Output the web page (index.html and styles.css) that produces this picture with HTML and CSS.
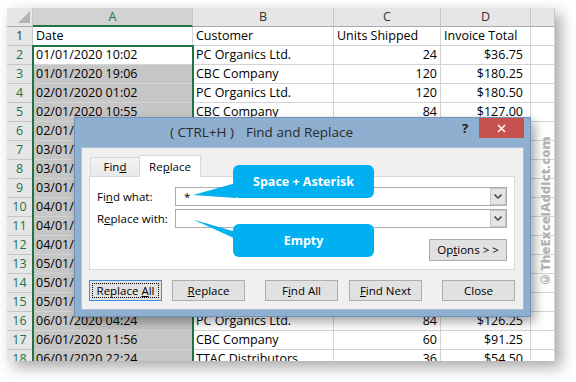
FILE: index.html
```html
<!DOCTYPE html>
<html>
<head>
<meta charset="utf-8">
<title>Find and Replace</title>
<link rel="stylesheet" href="styles.css">
</head>
<body>
<div class="stage">
  <div class="sheet">
    <div class="grid">
      <div class="c corner"><span class="tri"></span></div>
      <div class="c ch sel">A</div><div class="c ch">B</div><div class="c ch">C</div><div class="c ch">D</div><div class="c ch"></div>

      <div class="c rh plain">1</div><div class="c">Date</div><div class="c">Customer</div><div class="c">Units Shipped</div><div class="c">Invoice Total</div><div class="c"></div>
      <div class="c rh">2</div><div class="c">01/01/2020 10:02</div><div class="c">PC Organics Ltd.</div><div class="c num">24</div><div class="c cur">$36.75</div><div class="c"></div>
      <div class="c rh">3</div><div class="c fill">01/01/2020 19:06</div><div class="c">CBC Company</div><div class="c num">120</div><div class="c cur">$180.25</div><div class="c"></div>
      <div class="c rh">4</div><div class="c fill">02/01/2020 01:02</div><div class="c">PC Organics Ltd.</div><div class="c num">120</div><div class="c cur">$180.50</div><div class="c"></div>
      <div class="c rh">5</div><div class="c fill">02/01/2020 10:55</div><div class="c">CBC Company</div><div class="c num">84</div><div class="c cur">$127.00</div><div class="c"></div>
      <div class="c rh">6</div><div class="c fill">02/01/2020 17:30</div><div class="c">TTAC Distributors</div><div class="c num">48</div><div class="c cur">$72.00</div><div class="c"></div>
      <div class="c rh">7</div><div class="c fill">03/01/2020 08:15</div><div class="c">PC Organics Ltd.</div><div class="c num">60</div><div class="c cur">$91.25</div><div class="c"></div>
      <div class="c rh">8</div><div class="c fill">03/01/2020 12:40</div><div class="c">CBC Company</div><div class="c num">36</div><div class="c cur">$54.50</div><div class="c"></div>
      <div class="c rh">9</div><div class="c fill">03/01/2020 21:05</div><div class="c">TTAC Distributors</div><div class="c num">120</div><div class="c cur">$180.25</div><div class="c"></div>
      <div class="c rh">10</div><div class="c fill">04/01/2020 02:18</div><div class="c">PC Organics Ltd.</div><div class="c num">24</div><div class="c cur">$36.75</div><div class="c"></div>
      <div class="c rh">11</div><div class="c fill">04/01/2020 09:47</div><div class="c">CBC Company</div><div class="c num">84</div><div class="c cur">$127.00</div><div class="c"></div>
      <div class="c rh">12</div><div class="c fill">04/01/2020 16:22</div><div class="c">TTAC Distributors</div><div class="c num">60</div><div class="c cur">$91.25</div><div class="c"></div>
      <div class="c rh">13</div><div class="c fill">05/01/2020 07:09</div><div class="c">PC Organics Ltd.</div><div class="c num">120</div><div class="c cur">$180.50</div><div class="c"></div>
      <div class="c rh">14</div><div class="c fill">05/01/2020 13:51</div><div class="c">CBC Company</div><div class="c num">36</div><div class="c cur">$54.50</div><div class="c"></div>
      <div class="c rh">15</div><div class="c fill">05/01/2020 20:36</div><div class="c">TTAC Distributors</div><div class="c num">48</div><div class="c cur">$72.00</div><div class="c"></div>
      <div class="c rh">16</div><div class="c fill">06/01/2020 04:24</div><div class="c">PC Organics Ltd.</div><div class="c num">84</div><div class="c cur">$126.25</div><div class="c"></div>
      <div class="c rh">17</div><div class="c fill">06/01/2020 11:56</div><div class="c">CBC Company</div><div class="c num">60</div><div class="c cur">$91.25</div><div class="c"></div>
      <div class="c rh">18</div><div class="c fill">06/01/2020 22:24</div><div class="c">TTAC Distributors</div><div class="c num">36</div><div class="c cur">$54.50</div><div class="c"></div>
    </div>
    <div class="selection"></div>
  </div>

  <div class="dialog">
    <div class="titlebar">
      <div class="title"><span>( CTRL+H )</span><span>Find and Replace</span></div>
      <div class="help">?</div>
      <div class="close">
        <svg width="9" height="9" viewBox="0 0 9 9"><path d="M1 1L8 8M8 1L1 8" stroke="#fff" stroke-width="1.5" fill="none"/></svg>
      </div>
    </div>
    <div class="client">
      <div class="tabs">
        <div class="tab">Fin<u>d</u></div>
        <div class="tab active">Re<u>p</u>lace</div>
      </div>
      <div class="pane">
        <div class="row">
          <div class="lbl">Fi<u>n</u>d what:</div>
          <div class="combo"><div class="val">*</div><div class="dd"><svg width="8" height="5" viewBox="0 0 8 5"><path d="M0.5 0.5L4 4L7.5 0.5" stroke="#505050" stroke-width="1.6" fill="none"/></svg></div></div>
        </div>
        <div class="row">
          <div class="lbl">R<u>e</u>place with:</div>
          <div class="combo"><div class="val"></div><div class="dd"><svg width="8" height="5" viewBox="0 0 8 5"><path d="M0.5 0.5L4 4L7.5 0.5" stroke="#505050" stroke-width="1.6" fill="none"/></svg></div></div>
        </div>
        <div class="optrow"><div class="btn opt">Op<u>t</u>ions &gt; &gt;</div></div>
      </div>
      <div class="buttons">
        <div class="btn default">Replace <u>A</u>ll</div>
        <div class="btn g10"><u>R</u>eplace</div>
        <div class="btn g20">F<u>i</u>nd All</div>
        <div class="btn g11"><u>F</u>ind Next</div>
        <div class="btn g20">Close</div>
      </div>
    </div>
  </div>

  <svg class="pointers" width="50" height="62" viewBox="0 0 50 62">
    <polygon points="3,15 46,3 46,18" fill="#00b0f0"/>
    <polygon points="3,39.5 46,52 46,59" fill="#00b0f0"/>
  </svg>
  <div class="callout c1">Space + Asterisk</div>
  <div class="callout c2">Empty</div>

  <div class="watermark">©TheExcelAddict.com</div>
</div>
</body>
</html>
```

FILE: styles.css
```css
* { box-sizing: border-box; }
html, body { margin: 0; padding: 0; background: #fff; }
body { width: 576px; height: 382px; overflow: hidden; font-family: "Open Sans", "Noto Sans", sans-serif; }

.stage { position: relative; width: 576px; height: 382px; padding: 8px 0 0 7px; }

/* spreadsheet */
.sheet {
  position: relative;
  width: 548px;
  height: 353px;
  overflow: hidden;
  background: #fff;
  box-shadow: 6px 6px 14px rgba(0,0,0,0.35);
}
.grid {
  display: grid;
  grid-template-columns: 26px 160px 141px 107px 90px 24px;
  grid-auto-rows: 19px;
  font-size: 12.5px;
}
.c {
  border-right: 1px solid #d4d4d4;
  border-bottom: 1px solid #d4d4d4;
  padding: 0 3px;
  line-height: 18px;
  white-space: nowrap;
  overflow: hidden;
  color: #000;
}
.num { text-align: right; }
.cur { text-align: right; padding-right: 7px; }
.fill { background: #c6c6c6; }
.corner {
  background: #e6e6e6;
  border-right-color: #c6c6c6;
  border-bottom-color: #ababab;
  display: flex;
  align-items: flex-end;
  justify-content: flex-end;
  padding: 0 2px 3px 0;
}
.tri {
  width: 12px;
  height: 12px;
  background: #b4b4b4;
  clip-path: polygon(100% 0, 100% 100%, 0 100%);
}
.ch {
  background: #e6e6e6;
  color: #333;
  text-align: center;
  border-right-color: #c6c6c6;
  border-bottom-color: #ababab;
}
.ch.sel {
  background: #d2d2d2;
  color: #217346;
  border-bottom: 2px solid #217346;
}
.rh {
  background: #e6e6e6;
  color: #217346;
  text-align: center;
  padding: 0;
  border-right-color: #c6c6c6;
  border-bottom-color: #c6c6c6;
}
.rh.plain { color: #333; }
.selection {
  position: absolute;
  left: 25px;
  top: 37px;
  width: 162px;
  height: 340px;
  border: 2px solid #217346;
  pointer-events: none;
}

/* dialog */
.dialog {
  position: absolute;
  left: 74px;
  top: 117px;
  width: 457px;
  height: 200px;
  background: #8fafd1;
  border: 1px solid #6f91bb;
  box-shadow: 4px 5px 10px rgba(0,0,0,0.35);
  display: flex;
  flex-direction: column;
  font-size: 11.5px;
  color: #000;
}
.titlebar {
  flex: none;
  height: 29px;
  display: flex;
  align-items: flex-start;
  padding: 0 6px 0 95px;
}
.title {
  flex: 1;
  display: flex;
  gap: 12px;
  font-size: 13.5px;
  line-height: 28px;
  color: #2a2a2a;
}
.help {
  width: 14px;
  margin-right: 7px;
  text-align: center;
  font-weight: 700;
  font-size: 13px;
  line-height: 20px;
  color: #1e1e1e;
}
.close {
  width: 45px;
  height: 20px;
  background: #c75050;
  display: flex;
  align-items: center;
  justify-content: center;
}
.close svg { display: block; }

.client {
  flex: 1;
  margin: 0 6px 6px;
  background: #f0f0f0;
  border: 1px solid #a9bfd8;
  padding: 7px 8px 0 7px;
  display: flex;
  flex-direction: column;
}
.tabs {
  display: flex;
  align-items: flex-end;
  height: 21px;
  padding-left: 1px;
  position: relative;
  z-index: 1;
}
.tab {
  width: 50px;
  height: 19px;
  border: 1px solid #d9d9d9;
  border-bottom: none;
  background: linear-gradient(#f4f4f4, #e9e9e9);
  text-align: center;
  line-height: 18px;
}
.tab.active {
  width: 62px;
  height: 22px;
  margin-bottom: -1px;
  margin-left: -1px;
  background: #fff;
  line-height: 22px;
}
.pane {
  height: 94px;
  background: #fff;
  border: 1px solid #d9d9d9;
  padding: 10px 7px 0 7px;
}
.row {
  display: flex;
  align-items: center;
  height: 19px;
}
.row + .row { margin-top: 3px; }
.lbl { width: 78px; }
.combo {
  flex: 1;
  height: 19px;
  border: 1px solid #acacac;
  background: #fff;
  display: flex;
}
.val { flex: 1; padding-left: 8px; line-height: 17px; }
.dd {
  width: 16px;
  background: #e5e5e5;
  border: 1px solid #c8c8c8;
  display: flex;
  align-items: center;
  justify-content: center;
}
.dd svg { display: block; }
.optrow {
  display: flex;
  justify-content: flex-end;
  margin-top: 11px;
}
.btn {
  width: 73px;
  height: 21px;
  background: #e1e1e1;
  border: 1px solid #adadad;
  text-align: center;
  line-height: 19px;
  white-space: nowrap;
}
.btn.opt { width: 78px; height: 22px; line-height: 20px; }
.buttons {
  display: flex;
  margin-top: 10px;
}
.btn.default {
  border-color: #3c8ee0;
  outline: 1px dotted #000;
  outline-offset: -4px;
}
.g10 { margin-left: 10px; }
.g11 { margin-left: 11px; }
.g20 { margin-left: 20px; }

/* callouts */
.pointers {
  position: absolute;
  left: 190px;
  top: 180px;
}
.callout {
  position: absolute;
  left: 233px;
  width: 141px;
  height: 33px;
  background: #00b0f0;
  border-radius: 6px;
  color: #fff;
  font-weight: 700;
  font-size: 12.5px;
  display: flex;
  align-items: center;
  justify-content: center;
}
.c1 { top: 165px; }
.c2 { top: 224px; }

.watermark {
  position: absolute;
  left: 538px;
  top: 141px;
  height: 148px;
  writing-mode: vertical-rl;
  transform: rotate(180deg);
  font-family: "Open Sans", sans-serif;
  font-weight: 800;
  font-size: 13px;
  line-height: 14px;
  color: #b3b3b3;
  text-shadow: 0 0 1px #fff;
  white-space: nowrap;
}
```
